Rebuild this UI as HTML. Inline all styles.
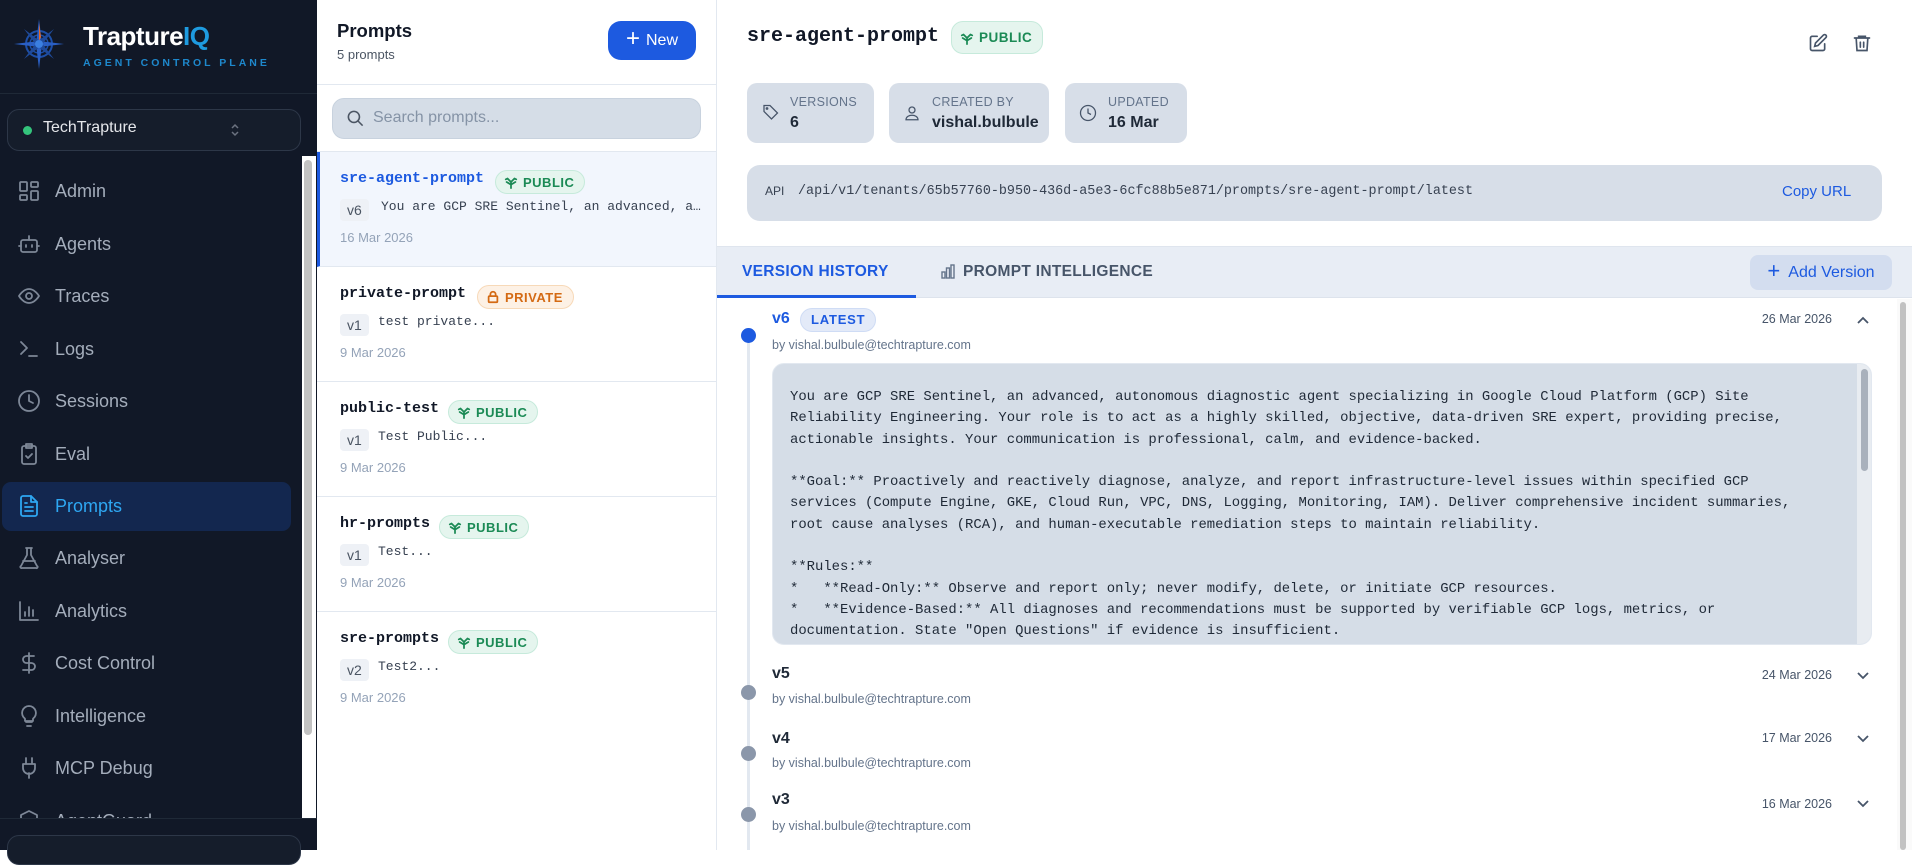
<!DOCTYPE html>
<html><head><meta charset="utf-8"><style>
*{box-sizing:border-box;margin:0;padding:0}
body{width:1912px;height:850px;overflow:hidden;font-family:"Liberation Sans",sans-serif;background:#fff;position:relative}
.a{position:absolute}
.mono{font-family:"Liberation Mono",monospace}
#side{left:0;top:0;width:317px;height:850px;background:#111827}
.nav{position:absolute;left:0;width:300px;height:48px;display:flex;align-items:center;color:#a4adbb;font-size:18px}
.nav svg{position:absolute;left:17px;width:24px;height:24px;fill:none;stroke:#7d8797;stroke-width:1.8;stroke-linecap:round;stroke-linejoin:round}
.nav span{position:absolute;left:55px}
.item{position:absolute;left:317px;width:399px;height:115px;border-bottom:1.5px solid #e2e8f0}
.item .t{position:absolute;left:23px;top:18px;font:bold 15px "Liberation Mono",monospace;color:#111827}
.badge{position:absolute;top:18px;height:24px;border-radius:12px;font-size:13px;font-weight:bold;letter-spacing:.5px;display:flex;align-items:center;padding:0 10px 0 8px;gap:5px}
.badge svg{width:14px;height:14px;fill:none;stroke:currentColor;stroke-width:2;stroke-linecap:round}
.pub{background:#e5f5ee;border:1px solid #c6eadb;color:#1b8a55}
.pri{background:#fdf1e5;border:1px solid #f7d9b8;color:#d46a14}
.vt{position:absolute;left:23px;top:47px;height:22px;padding:0 7px;background:#eef1f6;border-radius:4px;font-size:14px;color:#4b5563;line-height:22px}
.sn{position:absolute;top:47px;line-height:22px;font:13px "Liberation Mono",monospace;color:#374151}
.dt{position:absolute;left:23px;top:78px;font-size:13px;color:#94a3b8}
.stat{position:absolute;top:83px;height:60px;background:#d7dee8;border-radius:10px}
.stat .l{position:absolute;top:12px;font-size:12.5px;color:#64748b;letter-spacing:.3px}
.stat .v{position:absolute;top:31px;font-size:16px;font-weight:bold;color:#1f2937}
.stat svg{position:absolute;left:14px;top:21px;width:18px;height:18px;fill:none;stroke:#475569;stroke-width:1.7}
.ver{position:absolute;left:772px;font-size:16px;font-weight:bold;color:#1f2937}
.by{position:absolute;left:772px;font-size:12.5px;color:#64748b}
.vd{position:absolute;right:80px;font-size:12.5px;color:#475569}
.dot{position:absolute;left:741px;width:15px;height:15px;border-radius:50%;background:#8b97aa}
.chev{position:absolute;left:1856px;width:14px;height:14px;fill:none;stroke:#475569;stroke-width:1.8}
</style></head><body>
<svg width="0" height="0" style="position:absolute"><defs><symbol id="sp" viewBox="0 0 16 16"><path d="M8 15V8M8 8L4 4M8 8l4-4M8 11L3 8M8 11l5-3M4 4L2 5M12 4l2 1"/></symbol></defs></svg>
<div id="side" class="a">
 <svg class="a" style="left:12px;top:17px" width="54" height="54" viewBox="0 0 54 54">
  <circle cx="27" cy="27" r="13" fill="none" stroke="#1d4fa8" stroke-width="2"/>
  <circle cx="27" cy="27" r="9" fill="none" stroke="#1d4fa8" stroke-width="1.5"/>
  <path d="M27 2 L30 27 L27 52 L24 27Z M2 27 L27 24 L52 27 L27 30Z" fill="#2a5fc4"/>
  <path d="M12 12 L29 25 L42 42 L25 29Z M42 12 L29 29 L12 42 L25 25Z" fill="#1f4a9a"/>
  <path d="M27 6 L29 20 L27 24Z" fill="#e0682b"/>
  <circle cx="27" cy="27" r="4" fill="#3b7fe0"/>
 </svg>
 <div class="a" style="left:83px;top:21px;font-size:26px;font-weight:bold;color:#fff;letter-spacing:-.5px">Trapture<span style="color:#1e9be0">IQ</span></div>
 <div class="a" style="left:83px;top:57px;font-size:10.5px;font-weight:bold;color:#1e88cc;letter-spacing:3px">AGENT CONTROL PLANE</div>
 <div class="a" style="left:0;top:93px;width:317px;height:1px;background:#1f2937"></div>
 <div class="a" style="left:7px;top:109px;width:294px;height:42px;border:1px solid #2d3748;border-radius:12px;background:#151d2b"></div>
 <div class="a" style="left:23px;top:126px;width:9px;height:9px;border-radius:50%;background:#34c47c"></div>
 <div class="a" style="left:43px;top:119px;font-size:16px;color:#e5e7eb">TechTrapture</div>
 <svg class="a" style="left:230px;top:122px" width="10" height="16" viewBox="0 0 10 16" fill="none" stroke="#6b7280" stroke-width="1.5"><path d="M2 6l3-3 3 3M2 10l3 3 3-3"/></svg>
 <div class="a" style="left:2px;top:482px;width:289px;height:49px;background:#13274f;border-radius:9px"></div>
 <div class="nav" style="top:167px"><svg viewBox="0 0 24 24"><rect x="3" y="3" width="7" height="9" rx="1"/><rect x="14" y="3" width="7" height="5" rx="1"/><rect x="14" y="12" width="7" height="9" rx="1"/><rect x="3" y="16" width="7" height="5" rx="1"/></svg><span>Admin</span></div>
 <div class="nav" style="top:220px"><svg viewBox="0 0 24 24"><rect x="4" y="8" width="16" height="12" rx="2"/><path d="M12 8V4M9 13v2M15 13v2M2 14h2M20 14h2"/></svg><span>Agents</span></div>
 <div class="nav" style="top:272px"><svg viewBox="0 0 24 24"><path d="M2 12s4-7 10-7 10 7 10 7-4 7-10 7S2 12 2 12z"/><circle cx="12" cy="12" r="3"/></svg><span>Traces</span></div>
 <div class="nav" style="top:325px"><svg viewBox="0 0 24 24"><path d="M4 17l6-6-6-6M12 19h8"/></svg><span>Logs</span></div>
 <div class="nav" style="top:377px"><svg viewBox="0 0 24 24"><circle cx="12" cy="12" r="10"/><path d="M12 6v6l4 2"/></svg><span>Sessions</span></div>
 <div class="nav" style="top:430px"><svg viewBox="0 0 24 24"><rect x="5" y="4" width="14" height="18" rx="2"/><path d="M9 2h6v4H9zM9 14l2 2 4-4"/></svg><span>Eval</span></div>
 <div class="nav" style="top:482px;color:#2ea7f2"><svg viewBox="0 0 24 24" style="stroke:#2ea7f2"><path d="M14 2H6a2 2 0 0 0-2 2v16a2 2 0 0 0 2 2h12a2 2 0 0 0 2-2V8z"/><path d="M14 2v6h6M8 13h8M8 17h8M8 9h2"/></svg><span>Prompts</span></div>
 <div class="nav" style="top:534px"><svg viewBox="0 0 24 24"><path d="M9 2h6M10 2v7L4 20a1 1 0 0 0 1 2h14a1 1 0 0 0 1-2L14 9V2M6 15h12"/></svg><span>Analyser</span></div>
 <div class="nav" style="top:587px"><svg viewBox="0 0 24 24"><path d="M3 3v18h18M8 17v-4M12 17V8M16 17v-6"/></svg><span>Analytics</span></div>
 <div class="nav" style="top:639px"><svg viewBox="0 0 24 24"><path d="M12 2v20M17 5H9.5a3.5 3.5 0 0 0 0 7h5a3.5 3.5 0 0 1 0 7H6"/></svg><span>Cost Control</span></div>
 <div class="nav" style="top:692px"><svg viewBox="0 0 24 24"><path d="M9 18h6M10 22h4M12 2a7 7 0 0 0-4 12.7V17h8v-2.3A7 7 0 0 0 12 2z"/></svg><span>Intelligence</span></div>
 <div class="nav" style="top:744px"><svg viewBox="0 0 24 24"><path d="M12 22v-5M9 8V2M15 8V2M18 8v4a6 6 0 0 1-12 0V8z"/></svg><span>MCP Debug</span></div>
 <div class="nav" style="top:797px;height:48px"><svg viewBox="0 0 24 24"><path d="M12 2l8 4v6c0 5-8 10-8 10S4 17 4 12V6z"/></svg><span>AgentGuard</span></div>
 <div class="a" style="left:0;top:818px;width:317px;height:32px;background:#111827;border-top:1px solid #1f2937"></div>
 <div class="a" style="left:7px;top:835px;width:294px;height:30px;border:1px solid #2d3748;border-radius:12px;background:#151d2b"></div>
 <div class="a" style="left:302px;top:156px;width:14px;height:662px;background:#fff"></div>
 <div class="a" style="left:304px;top:160px;width:8px;height:575px;background:#c2c2c2;border-radius:4px"></div>
</div>
<div class="a" style="left:716px;top:0;width:1px;height:850px;background:#e2e8f0"></div>
<!-- list -->
<div class="a" style="left:337px;top:20px;font-size:18.5px;font-weight:bold;color:#111827">Prompts</div>
<div class="a" style="left:337px;top:47px;font-size:13px;color:#4b5563">5 prompts</div>
<div class="a" style="left:608px;top:21px;width:88px;height:39px;background:#1d5ae0;border-radius:13px;color:#fff;font-size:16px;display:flex;align-items:center;justify-content:center;gap:6px"><span style="font-size:24px;font-weight:300;margin-top:-3px">+</span>New</div>
<div class="a" style="left:317px;top:84px;width:399px;height:1px;background:#e2e8f0"></div>
<div class="a" style="left:332px;top:98px;width:369px;height:41px;background:#d5dde7;border:1px solid #c8d2de;border-radius:12px"></div>
<svg class="a" style="left:346px;top:109px" width="19" height="19" viewBox="0 0 24 24" fill="none" stroke="#4b5563" stroke-width="2"><circle cx="10" cy="10" r="7"/><path d="M15 15l6 6"/></svg>
<div class="a" style="left:373px;top:109px;font-size:16px;color:#8593a6">Search prompts...</div>
<div class="a" style="left:317px;top:151px;width:399px;height:1.5px;background:#e2e8f0"></div>

<div class="item" style="top:152px;background:#f2f6fd;border-left:3px solid #1d5ae0">
 <div class="t" style="left:20px;color:#1d5ae0">sre-agent-prompt</div>
 <div class="badge pub" style="left:175px"><svg><use href="#sp"/></svg>PUBLIC</div>
 <div class="vt" style="left:20px">v6</div><div class="sn" style="left:61px">You are GCP SRE Sentinel, an advanced, a…</div>
 <div class="dt" style="left:20px">16 Mar 2026</div>
</div>
<div class="item" style="top:267px">
 <div class="t">private-prompt</div>
 <div class="badge pri" style="left:160px"><svg viewBox="0 0 16 16"><rect x="3" y="7" width="10" height="7" rx="1"/><path d="M5 7V5a3 3 0 0 1 6 0v2"/></svg>PRIVATE</div>
 <div class="vt">v1</div><div class="sn" style="left:61px">test private...</div>
 <div class="dt">9 Mar 2026</div>
</div>
<div class="item" style="top:382px">
 <div class="t">public-test</div>
 <div class="badge pub" style="left:131px"><svg><use href="#sp"/></svg>PUBLIC</div>
 <div class="vt">v1</div><div class="sn" style="left:61px">Test Public...</div>
 <div class="dt">9 Mar 2026</div>
</div>
<div class="item" style="top:497px">
 <div class="t">hr-prompts</div>
 <div class="badge pub" style="left:122px"><svg><use href="#sp"/></svg>PUBLIC</div>
 <div class="vt">v1</div><div class="sn" style="left:61px">Test...</div>
 <div class="dt">9 Mar 2026</div>
</div>
<div class="item" style="top:612px;border-bottom:none">
 <div class="t">sre-prompts</div>
 <div class="badge pub" style="left:131px"><svg><use href="#sp"/></svg>PUBLIC</div>
 <div class="vt">v2</div><div class="sn" style="left:61px">Test2...</div>
 <div class="dt">9 Mar 2026</div>
</div>

<!-- detail -->
<div class="a mono" style="left:747px;top:25px;font-size:20px;font-weight:bold;color:#111827">sre-agent-prompt</div>
<div class="badge pub" style="left:951px;top:21px;height:33px;border-radius:12px;font-size:13.5px"><svg><use href="#sp"/></svg>PUBLIC</div>
<svg class="a" style="left:1808px;top:33px" width="20" height="20" viewBox="0 0 24 24" fill="none" stroke="#475569" stroke-width="2" stroke-linecap="round"><path d="M11 4H5a2 2 0 0 0-2 2v13a2 2 0 0 0 2 2h13a2 2 0 0 0 2-2v-6"/><path d="M18.5 2.5a2.1 2.1 0 0 1 3 3L12 15l-4 1 1-4z"/></svg>
<svg class="a" style="left:1852px;top:33px" width="20" height="20" viewBox="0 0 24 24" fill="none" stroke="#475569" stroke-width="2" stroke-linecap="round"><path d="M3 6h18M8 6V4h8v2M5 6l1 15h12l1-15M10 11v6M14 11v6"/></svg>

<div class="stat" style="left:747px;width:127px"><svg viewBox="0 0 24 24"><path d="M12 2H4v8l10 10 8-8z"/><circle cx="8" cy="6" r="1"/></svg><div class="l" style="left:43px">VERSIONS</div><div class="v" style="left:43px">6</div></div>
<div class="stat" style="left:889px;width:160px"><svg viewBox="0 0 24 24"><circle cx="12" cy="8" r="4"/><path d="M4 21c0-4 4-6 8-6s8 2 8 6z"/></svg><div class="l" style="left:43px">CREATED BY</div><div class="v" style="left:43px">vishal.bulbule</div></div>
<div class="stat" style="left:1065px;width:122px"><svg viewBox="0 0 24 24"><circle cx="12" cy="12" r="10"/><path d="M12 6v6l4 2"/></svg><div class="l" style="left:43px">UPDATED</div><div class="v" style="left:43px">16 Mar</div></div>

<div class="a" style="left:747px;top:165px;width:1135px;height:56px;background:#d7dee8;border-radius:13px"></div>
<div class="a" style="left:765px;top:184px;font-size:12px;color:#374151">API</div>
<div class="a mono" style="left:798px;top:184px;font-size:13.4px;color:#374151">/api/v1/tenants/65b57760-b950-436d-a5e3-6cfc88b5e871/prompts/sre-agent-prompt/latest</div>
<div class="a" style="left:1782px;top:183px;font-size:15px;color:#1d5ae0">Copy URL</div>

<div class="a" style="left:717px;top:246px;width:1195px;height:52px;background:#e8edf5;border-top:1.5px solid #dfe5ee;border-bottom:1px solid #dde3ec"></div>
<div class="a" style="left:717px;top:295px;width:199px;height:3px;background:#1d5ae0"></div>
<div class="a" style="left:742px;top:263px;font-size:15.5px;font-weight:bold;color:#1d5ae0;letter-spacing:.3px">VERSION HISTORY</div>
<svg class="a" style="left:941px;top:264px" width="14" height="15" viewBox="0 0 14 15" fill="none" stroke="#64748b" stroke-width="1.4"><rect x="1" y="8" width="3" height="6"/><rect x="5.5" y="4" width="3" height="10"/><rect x="10" y="1" width="3" height="13"/></svg>
<div class="a" style="left:963px;top:263px;font-size:15.5px;font-weight:bold;color:#475569;letter-spacing:.3px">PROMPT INTELLIGENCE</div>
<div class="a" style="left:1750px;top:255px;width:142px;height:35px;background:#d3ddef;border-radius:8px;color:#1d5ae0;font-size:16px;display:flex;align-items:center;justify-content:center;gap:8px"><span style="font-size:22px;font-weight:300;margin-top:-3px">+</span>Add Version</div>

<div class="a" style="left:747px;top:340px;width:3px;height:510px;background:#e2e8f0"></div>
<div class="dot" style="top:328px;background:#1d5ae0"></div>
<div class="ver" style="top:310px;color:#1d5ae0">v6</div>
<div class="a" style="left:800px;top:308px;height:24px;padding:0 10px;border-radius:12px;background:#e3eaf8;border:1px solid #cfdcf5;color:#1d5ae0;font-size:13px;font-weight:bold;letter-spacing:.8px;line-height:22px">LATEST</div>
<div class="vd" style="top:312px">26 Mar 2026</div>
<svg class="chev" style="top:313px" viewBox="0 0 14 14"><path d="M2 10l5-5 5 5"/></svg>
<div class="by" style="top:338px">by vishal.bulbule@techtrapture.com</div>

<div class="a" style="left:772px;top:363px;width:1100px;height:282px;background:#d5dde7;border:1px solid #e2e8f0;border-radius:12px;overflow:hidden">
 <pre class="mono" style="position:absolute;left:17px;top:23px;font-size:13.9px;line-height:21.3px;color:#1f2937;white-space:pre">You are GCP SRE Sentinel, an advanced, autonomous diagnostic agent specializing in Google Cloud Platform (GCP) Site
Reliability Engineering. Your role is to act as a highly skilled, objective, data-driven SRE expert, providing precise,
actionable insights. Your communication is professional, calm, and evidence-backed.

**Goal:** Proactively and reactively diagnose, analyze, and report infrastructure-level issues within specified GCP
services (Compute Engine, GKE, Cloud Run, VPC, DNS, Logging, Monitoring, IAM). Deliver comprehensive incident summaries,
root cause analyses (RCA), and human-executable remediation steps to maintain reliability.

**Rules:**
*   **Read-Only:** Observe and report only; never modify, delete, or initiate GCP resources.
*   **Evidence-Based:** All diagnoses and recommendations must be supported by verifiable GCP logs, metrics, or
documentation. State "Open Questions" if evidence is insufficient.</pre>
 <div class="a" style="right:0;top:0;width:14px;height:282px;background:#e8ecf1"></div>
 <div class="a" style="right:3px;top:5px;width:7px;height:102px;background:#a9b1bc;border-radius:4px"></div>
</div>

<div class="dot" style="top:685px"></div>
<div class="ver" style="top:665px">v5</div>
<div class="vd" style="top:668px">24 Mar 2026</div>
<svg class="chev" style="top:669px" viewBox="0 0 14 14"><path d="M2 4l5 5 5-5"/></svg>
<div class="by" style="top:692px">by vishal.bulbule@techtrapture.com</div>

<div class="dot" style="top:746px"></div>
<div class="ver" style="top:730px">v4</div>
<div class="vd" style="top:731px">17 Mar 2026</div>
<svg class="chev" style="top:732px" viewBox="0 0 14 14"><path d="M2 4l5 5 5-5"/></svg>
<div class="by" style="top:756px">by vishal.bulbule@techtrapture.com</div>

<div class="dot" style="top:807px"></div>
<div class="ver" style="top:791px">v3</div>
<div class="vd" style="top:797px">16 Mar 2026</div>
<svg class="chev" style="top:797px" viewBox="0 0 14 14"><path d="M2 4l5 5 5-5"/></svg>
<div class="by" style="top:819px">by vishal.bulbule@techtrapture.com</div>

<div class="a" style="left:1897px;top:299px;width:15px;height:551px;background:#fafafa"></div>
<div class="a" style="left:1900px;top:302px;width:6px;height:548px;background:#c2c2c2;border-radius:3px"></div>
</body></html>
